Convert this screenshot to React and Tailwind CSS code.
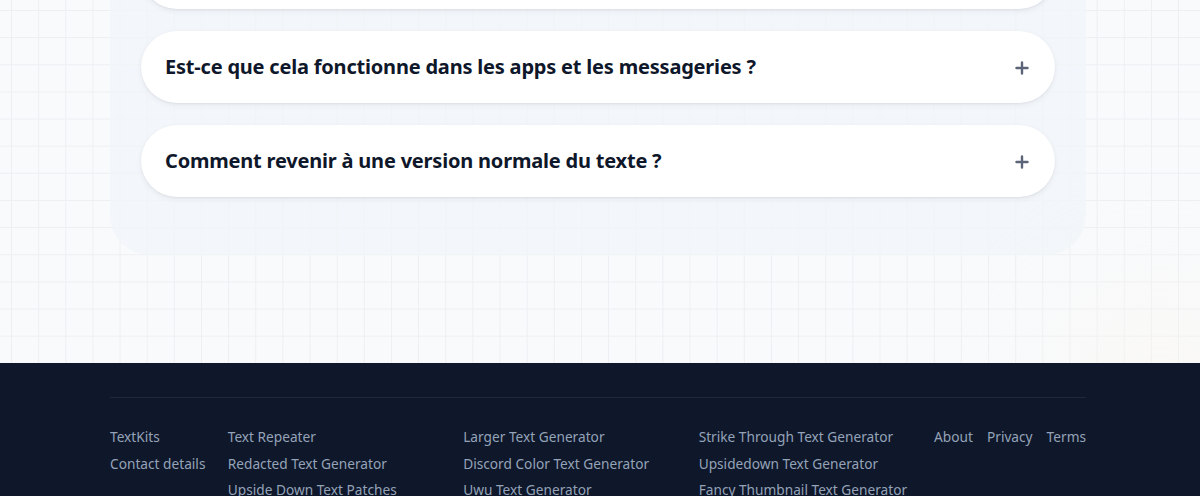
import React from "react";

const faqs = [
  "Qu'est-ce qu'un générateur de texte ?",
  "Est-ce que cela fonctionne dans les apps et les messageries ?",
  "Comment revenir à une version normale du texte ?",
];

const linkCols = [
  ["Text Repeater", "Redacted Text Generator", "Upside Down Text Patches"],
  ["Larger Text Generator", "Discord Color Text Generator", "Uwu Text Generator"],
  ["Strike Through Text Generator", "Upsidedown Text Generator", "Fancy Thumbnail Text Generator"],
];

const PlusIcon = () => (
  <svg width="14" height="14" viewBox="0 0 14 14" fill="none" stroke="#5b6478" strokeWidth="2.4" strokeLinecap="round">
    <path d="M7 1.5v11M1.5 7h11" />
  </svg>
);

const App = () => {
  return (
    <div className="min-h-screen w-full bg-[#f8fafc] font-['Noto_Sans',sans-serif] overflow-hidden">

      {/* FAQ section with grid background */}
      <section className="relative h-[363px] w-full overflow-hidden bg-[#f8fafc] bg-[linear-gradient(to_right,#edeff2_1px,transparent_1px),linear-gradient(to_bottom,#edeff2_1px,transparent_1px)] bg-[size:27.15px_27.15px] bg-[position:11px_10px]">

        {/* warm glow bottom right */}
        <div className="pointer-events-none absolute -bottom-28 -right-20 h-[200px] w-[240px] rounded-full bg-[#fcf7ee] opacity-40 blur-[60px]" />

        <div className="relative -mt-[94px] ml-[110px] w-[976px] rounded-[40px] bg-[#f1f5f9]/80 px-[31px] pb-[58px] pt-[31px]">
          <div className="flex flex-col gap-[22px]">
            {faqs.map((q) => (
              <div
                key={q}
                className="flex h-[72px] items-center justify-between rounded-[36px] bg-white pl-6 pr-[26px] shadow-[0_1px_2px_rgba(15,23,42,0.05),0_2px_6px_rgba(15,23,42,0.06)]"
              >
                <span className="text-[20px] font-bold tracking-[-0.01em] text-[#0f172a]">{q}</span>
                <span className="pt-[2px]"><PlusIcon /></span>
              </div>
            ))}
          </div>
        </div>
      </section>

      {/* Footer */}
      <footer className="w-full bg-[#0f172a] pt-[34px]">
        <div className="ml-[110px] w-[976px]">
          <div className="h-px w-full bg-[#1e293b]" />

          <div className="flex pt-[26px] text-[13.7px] leading-[26.5px] text-[#94a3b8]">
            <div className="flex w-[118px] flex-col">
              <a>TextKits</a>
              <a>Contact details</a>
            </div>

            {linkCols.map((col, i) => (
              <div key={i} className="flex w-[236px] flex-col">
                {col.map((l) => (
                  <a key={l}>{l}</a>
                ))}
              </div>
            ))}

            <div className="flex flex-1 justify-end gap-[14px]">
              <a>About</a>
              <a>Privacy</a>
              <a>Terms</a>
            </div>
          </div>
          <div className="h-10" />
        </div>
      </footer>
    </div>
  );
};

export default App;
